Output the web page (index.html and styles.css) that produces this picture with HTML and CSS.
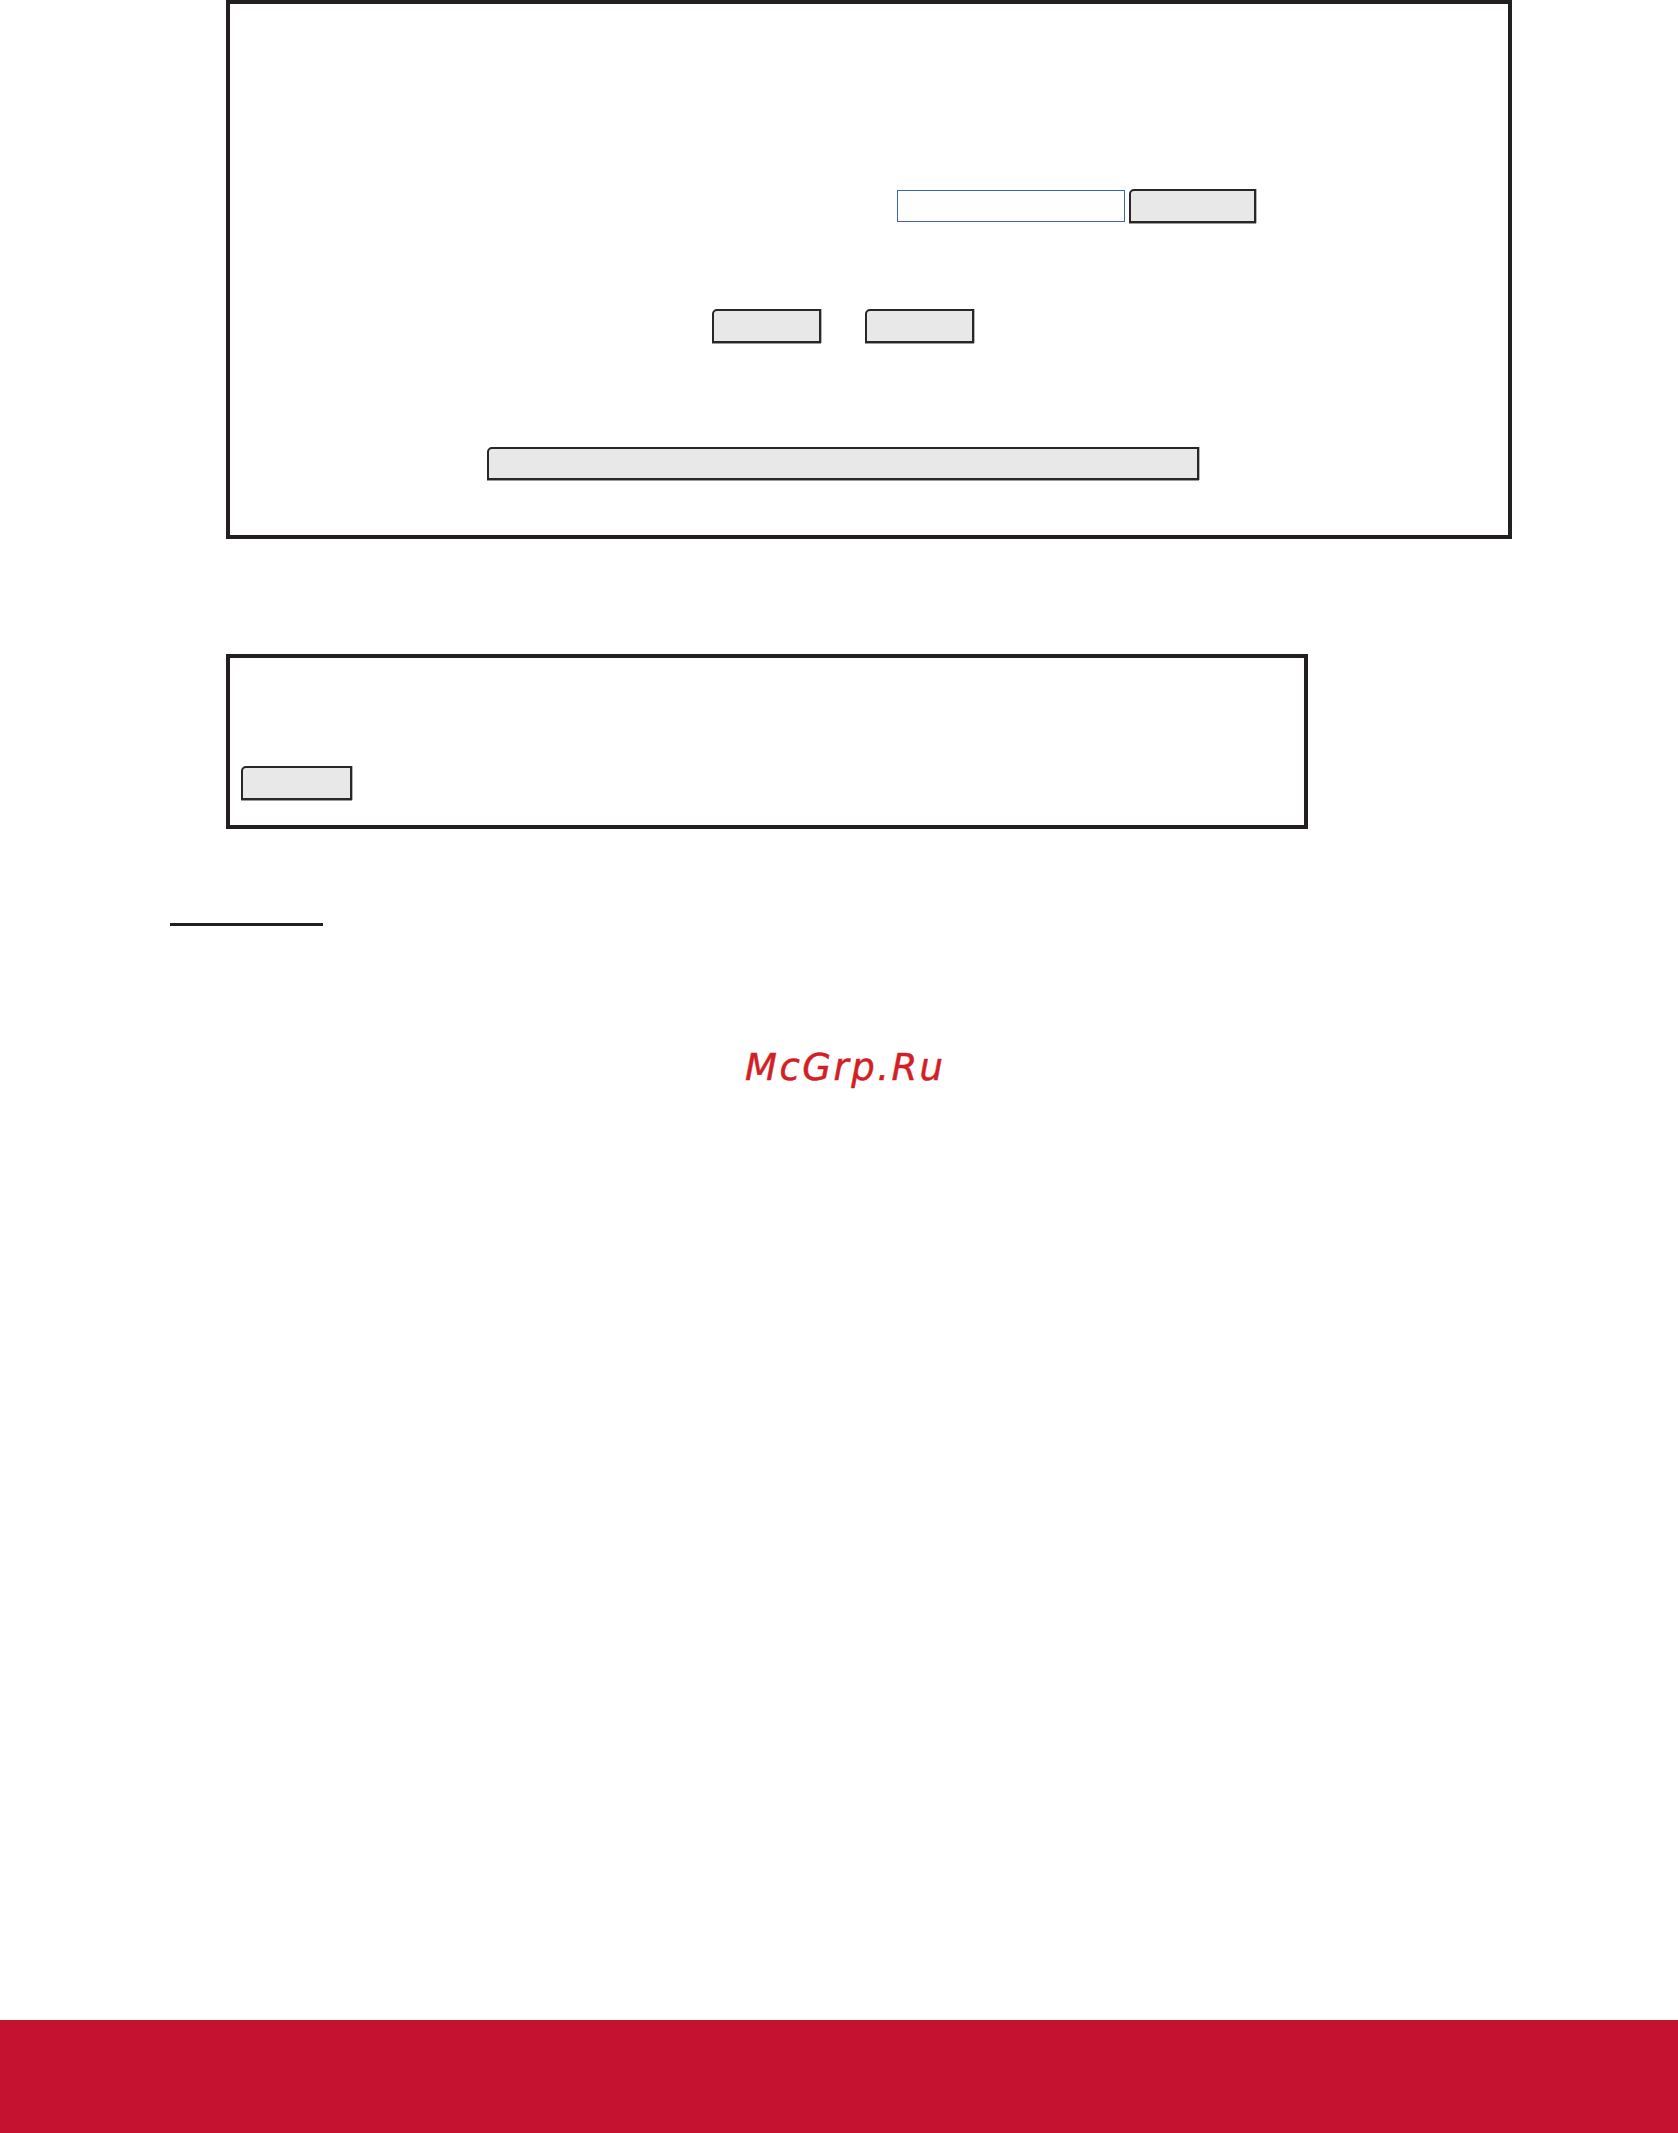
FILE: index.html
```html
<!DOCTYPE html>
<html lang="ru">
<head>
<meta charset="utf-8">
<title>McGrp.Ru</title>
<link rel="stylesheet" href="styles.css">
</head>
<body>
  <main class="page">
    <section class="panel panel-main">
      <div class="row row-search">
        <input class="field" type="text" aria-label="search">
        <button class="btn btn-search" type="button"></button>
      </div>
      <div class="row row-pair">
        <button class="btn btn-small" type="button"></button>
        <button class="btn btn-small" type="button"></button>
      </div>
      <div class="row row-wide">
        <button class="btn btn-wide" type="button"></button>
      </div>
    </section>

    <section class="panel panel-second">
      <button class="btn btn-small btn-left" type="button"></button>
    </section>

    <div class="rule"></div>

    <p class="brand">McGrp.Ru</p>
  </main>
  <footer class="footer"></footer>
</body>
</html>
```

FILE: styles.css
```css
html, body {
  margin: 0;
  padding: 0;
  background: #ffffff;
}

body {
  min-height: 100vh;
  display: flex;
  flex-direction: column;
  font-family: "DejaVu Sans", "Liberation Sans", sans-serif;
}

.page {
  flex: 1 0 auto;
  display: flex;
  flex-direction: column;
  align-items: flex-start;
}

/* framed panels */
.panel {
  box-sizing: border-box;
  margin-left: 226px;
  border: 4px solid #231f20;
  display: flex;
  flex-direction: column;
  align-items: flex-start;
}

.panel-main {
  width: 1286px;
  height: 539px;
  padding: 185px 0 0 0;
}

.panel-second {
  width: 1082px;
  height: 175px;
  margin-top: 115px;
  padding: 108px 0 0 11px;
}

.row {
  display: flex;
  align-items: flex-end;
}

.row-search {
  margin-left: 667px;
  gap: 4px;
}

.row-pair {
  margin-top: 86px;
  margin-left: 482px;
  gap: 44px;
}

.row-wide {
  margin-top: 104px;
  margin-left: 257px;
}

/* controls */
.field {
  box-sizing: border-box;
  width: 228px;
  height: 32px;
  margin: 0 0 1px 0;
  padding: 0;
  border: 1.5px solid #3d63b3;
  background: #fefefe;
  outline: none;
}

.btn {
  box-sizing: border-box;
  display: block;
  margin: 0;
  padding: 0;
  background: #e8e8e8;
  border: 2px solid #2a2627;
  border-top-left-radius: 5px;
  box-shadow: 0 1px 0 #9a9a9a, 1px 0 0 #b5b5b5;
}

.btn-search {
  width: 127px;
  height: 34px;
}

.btn-small {
  width: 109px;
  height: 34px;
}

.btn-left {
  width: 111px;
}

.btn-wide {
  width: 712px;
  height: 33px;
}

/* short underline */
.rule {
  margin-top: 94px;
  margin-left: 170px;
  width: 153px;
  height: 3px;
  background: #231f20;
}

.brand {
  margin: 123px 0 0 745px;
  font-family: "DejaVu Sans", sans-serif;
  font-style: italic;
  font-size: 37px;
  line-height: 1;
  letter-spacing: 2.5px;
  color: #d21f27;
  -webkit-text-stroke: 0.5px #d21f27;
}

.footer {
  flex: 0 0 auto;
  height: 113px;
  background: #c41230;
}
```
